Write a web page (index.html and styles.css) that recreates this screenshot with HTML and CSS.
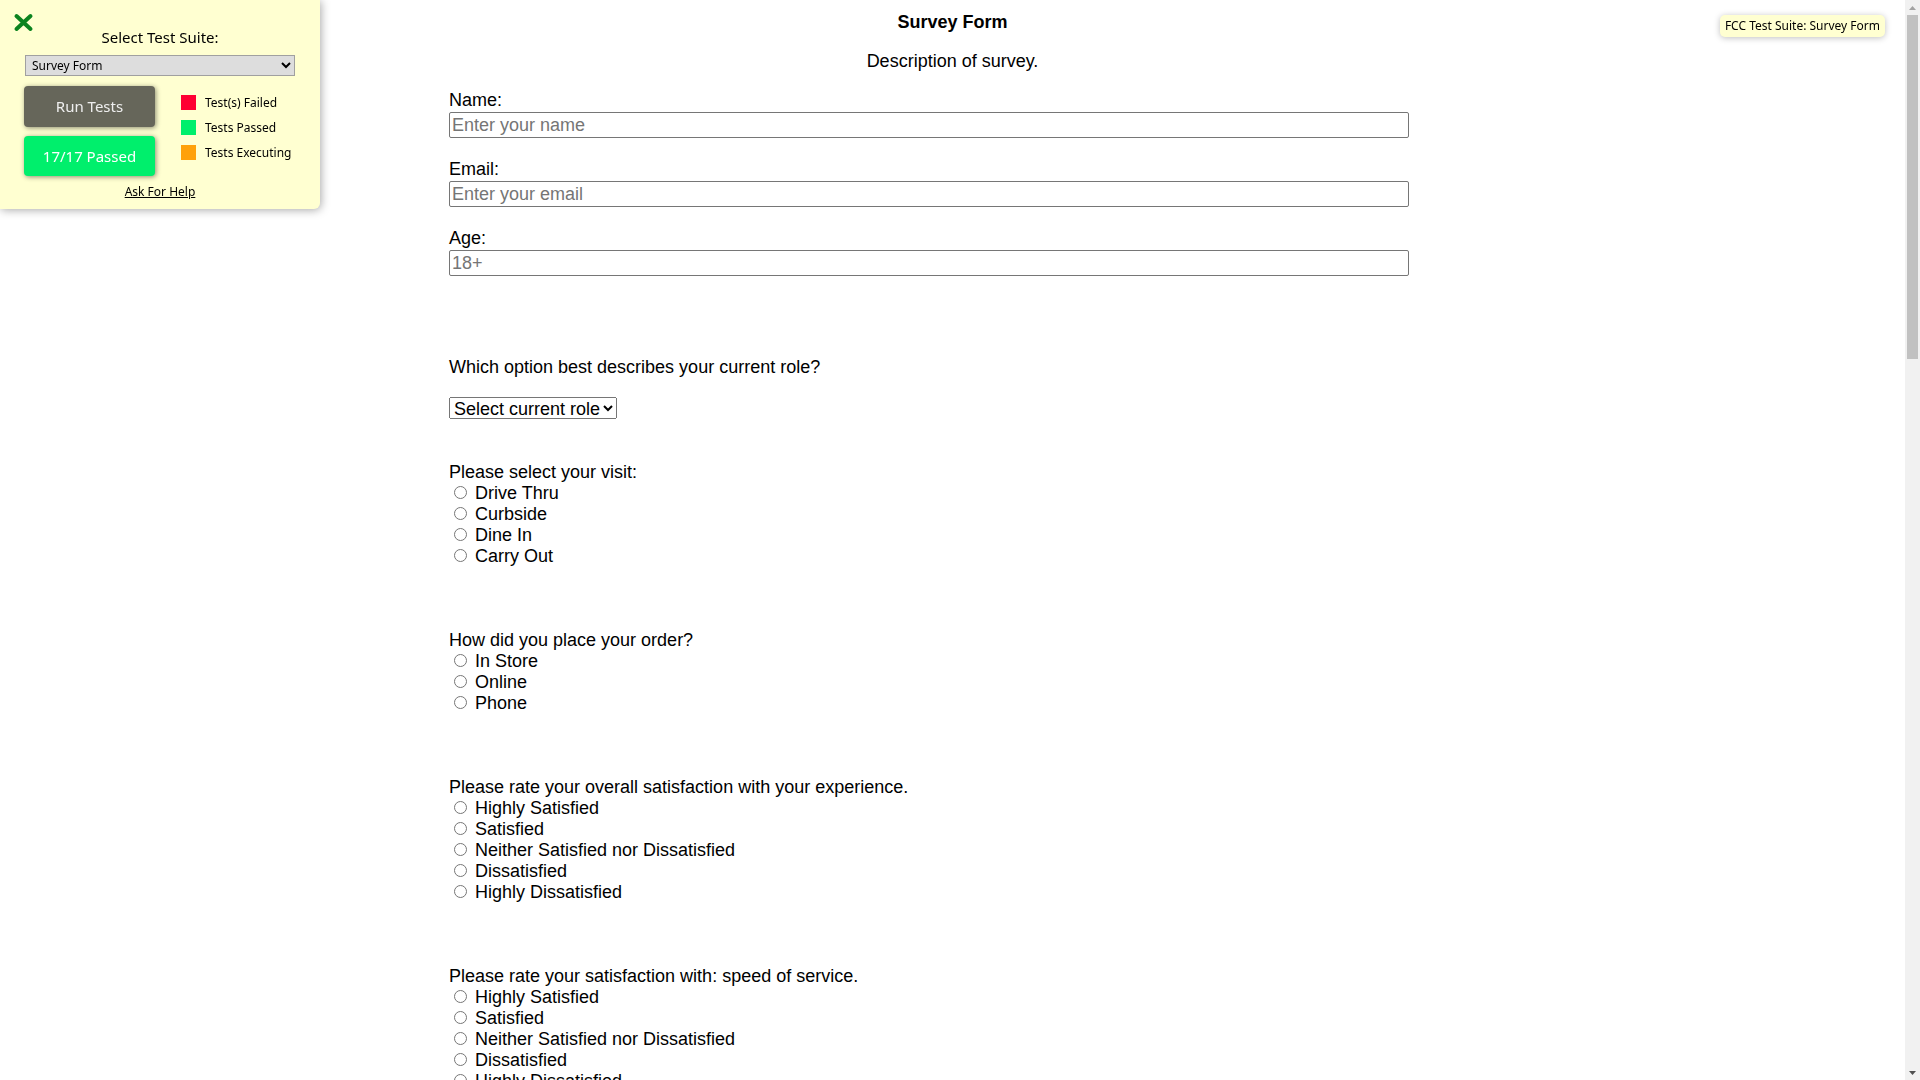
FILE: index.html
```html
<!DOCTYPE html>
<html lang="en">
<head>
<meta charset="utf-8">
<title>Survey Form</title>
<link rel="stylesheet" href="styles.css">
</head>
<body>
<header class="intro">
  <h1 class="title" id="title">Survey Form</h1>
  <p class="description" id="description">Description of survey.</p>
</header>

<form class="survey" id="survey-form">
  <div class="field">
    <label class="field-label" id="name-label" for="name">Name:</label>
    <input class="text-input" id="name" type="text" placeholder="Enter your name">
  </div>
  <div class="field">
    <label class="field-label" id="email-label" for="email">Email:</label>
    <input class="text-input" id="email" type="email" placeholder="Enter your email">
  </div>
  <div class="field">
    <label class="field-label" id="number-label" for="number">Age:</label>
    <input class="text-input" id="number" type="number" min="18" placeholder="18+">
  </div>

  <div class="question question-role">
    <p class="question-label">Which option best describes your current role?</p>
    <select class="role-select" id="dropdown">
      <option>Select current role</option>
      <option>Student</option>
      <option>Full Time Job</option>
      <option>Other</option>
    </select>
  </div>

  <div class="question question-visit">
    <p class="question-label">Please select your visit:</p>
    <label class="option"><input type="radio" name="visit"> Drive Thru</label>
    <label class="option"><input type="radio" name="visit"> Curbside</label>
    <label class="option"><input type="radio" name="visit"> Dine In</label>
    <label class="option"><input type="radio" name="visit"> Carry Out</label>
  </div>

  <div class="question">
    <p class="question-label">How did you place your order?</p>
    <label class="option"><input type="radio" name="order"> In Store</label>
    <label class="option"><input type="radio" name="order"> Online</label>
    <label class="option"><input type="radio" name="order"> Phone</label>
  </div>

  <div class="question">
    <p class="question-label">Please rate your overall satisfaction with your experience.</p>
    <label class="option"><input type="radio" name="overall"> Highly Satisfied</label>
    <label class="option"><input type="radio" name="overall"> Satisfied</label>
    <label class="option"><input type="radio" name="overall"> Neither Satisfied nor Dissatisfied</label>
    <label class="option"><input type="radio" name="overall"> Dissatisfied</label>
    <label class="option"><input type="radio" name="overall"> Highly Dissatisfied</label>
  </div>

  <div class="question">
    <p class="question-label">Please rate your satisfaction with: speed of service.</p>
    <label class="option"><input type="radio" name="speed"> Highly Satisfied</label>
    <label class="option"><input type="radio" name="speed"> Satisfied</label>
    <label class="option"><input type="radio" name="speed"> Neither Satisfied nor Dissatisfied</label>
    <label class="option"><input type="radio" name="speed"> Dissatisfied</label>
    <label class="option"><input type="radio" name="speed"> Highly Dissatisfied</label>
  </div>
</form>

<div class="suite" id="fcc_test_suite_wrapper">
  <button class="suite-close" type="button" aria-label="Close">
    <svg viewBox="0 0 21 19" width="21" height="19" aria-hidden="true">
      <path d="M3.5 3 L17.5 16 M17.5 3 L3.5 16" stroke="#0b831f" stroke-width="4" stroke-linecap="round" fill="none"/>
    </svg>
  </button>
  <p class="suite-heading">Select Test Suite:</p>
  <select class="suite-select">
    <option>Survey Form</option>
    <option>Tribute Page</option>
    <option>Product Landing Page</option>
  </select>
  <div class="suite-row">
    <div class="suite-buttons">
      <button class="suite-btn suite-btn-run" type="button">Run Tests</button>
      <button class="suite-btn suite-btn-pass" type="button">17/17 Passed</button>
    </div>
    <ul class="suite-legend">
      <li class="legend-item"><span class="swatch swatch-fail"></span>Test(s) Failed</li>
      <li class="legend-item"><span class="swatch swatch-pass"></span>Tests Passed</li>
      <li class="legend-item"><span class="swatch swatch-run"></span>Tests Executing</li>
    </ul>
  </div>
  <a class="suite-help" href="#">Ask For Help</a>
</div>

<div class="suite-tip">FCC Test Suite: Survey Form</div>

<div class="scrollbar" aria-hidden="true">
  <span class="scroll-btn">
    <svg viewBox="0 0 7 4" width="7" height="4"><polygon points="0,4 3.5,0 7,4" fill="#a3a3a3"/></svg>
  </span>
  <span class="scroll-thumb"></span>
  <span class="scroll-btn scroll-btn-down">
    <svg viewBox="0 0 7 4" width="7" height="4"><polygon points="0,0 7,0 3.5,4" fill="#505050"/></svg>
  </span>
</div>
</body>
</html>
```

FILE: styles.css
```css
body {
  margin: 0;
  padding-right: 15px;
  font-family: "Liberation Sans", Arial, sans-serif;
  font-size: 18px;
  line-height: 21px;
  color: #000;
  background: #fff;
}

/* Header */
.intro {
  text-align: center;
  padding-top: 12px;
}
.title {
  margin: 0;
  font-size: 18px;
  line-height: 21px;
  font-weight: bold;
}
.description {
  margin: 18px 0 0;
}

/* Form */
.survey {
  width: 960px;
  margin: 18px 0 0 449px;
}
.field + .field {
  margin-top: 21px;
}
.field-label {
  display: block;
}
.text-input {
  display: block;
  box-sizing: border-box;
  width: 960px;
  height: 26px;
  margin: 1px 0 0;
  padding: 1px 2px;
  border: 1px solid #767676;
  border-radius: 2px;
  font: 18px "Liberation Sans", Arial, sans-serif;
  color: #000;
}
.text-input::placeholder {
  color: #757575;
}

.question {
  margin-top: 63px;
}
.question-role {
  margin-top: 81px;
}
.question-visit {
  margin-top: 43px;
}
.question-label {
  display: block;
  margin: 0;
}
.role-select {
  display: block;
  box-sizing: border-box;
  width: 168px;
  height: 22px;
  margin-top: 19px;
  font: 18px "Liberation Sans", Arial, sans-serif;
  color: #000;
}
.option {
  display: block;
}
.option input {
  margin: 3px 3px 0 5px;
}

/* Test suite panel (overlay) */
.suite {
  position: fixed;
  top: 0;
  left: 0;
  z-index: 10;
  width: 320px;
  height: 209px;
  box-sizing: border-box;
  background: #ffffd1;
  border-bottom-right-radius: 6px;
  box-shadow: 1px 1px 10px rgba(0, 0, 0, 0.35);
  font-family: "Noto Sans", "Open Sans", sans-serif;
  color: #000;
}
.suite-close {
  position: absolute;
  top: 13px;
  left: 13px;
  width: 21px;
  height: 19px;
  padding: 0;
  border: 0;
  background: none;
}
.suite-close svg {
  display: block;
}
.suite-heading {
  margin: 0;
  padding-top: 27px;
  font-size: 15px;
  line-height: 20px;
  text-align: center;
}
.suite-select {
  display: block;
  box-sizing: border-box;
  width: 270px;
  height: 21px;
  margin: 8px auto 0;
  padding: 0 0 0 2px;
  font: 12px "Noto Sans", sans-serif;
  color: #000;
  background-color: #dddddd;
  border: 1px solid #a0a0a0;
  border-radius: 0;
}
.suite-row {
  display: flex;
  gap: 26px;
  margin: 10px 0 0 24px;
}
.suite-buttons {
  display: flex;
  flex-direction: column;
  gap: 9px;
  width: 131px;
}
.suite-btn {
  height: 41px;
  padding: 0 0 1px;
  border: 0;
  border-radius: 4px;
  font: 15px "Noto Sans", sans-serif;
  box-shadow: 1px 1px 5px rgba(0, 0, 0, 0.45);
}
.suite-btn-run {
  background: #66665a;
  color: #eeeeee;
}
.suite-btn-pass {
  height: 40px;
  background: #00ef6c;
  color: #ffffff;
}
.suite-legend {
  display: flex;
  flex-direction: column;
  gap: 10px;
  margin: 0;
  padding: 9px 0 0;
  list-style: none;
}
.legend-item {
  display: flex;
  align-items: center;
  height: 15px;
  font-size: 12px;
}
.swatch {
  width: 15px;
  height: 15px;
  margin-right: 9px;
}
.swatch-fail { background: #ff0033; }
.swatch-pass { background: #00ef6c; }
.swatch-run { background: #ffa10a; }
.suite-help {
  display: block;
  margin-top: 8px;
  font-size: 12px;
  line-height: 16px;
  text-align: center;
  color: #000;
  text-decoration: underline;
}

.suite-tip {
  position: fixed;
  top: 15px;
  right: 35px;
  z-index: 10;
  padding: 3px 5px;
  font: 12px/16px "Noto Sans", sans-serif;
  background: #ffffd1;
  border-radius: 5px;
  box-shadow: 0 1px 6px rgba(0, 0, 0, 0.25);
}

/* Window scrollbar (drawn) */
.scrollbar {
  position: fixed;
  top: 0;
  right: 0;
  z-index: 20;
  display: flex;
  flex-direction: column;
  width: 15px;
  height: 100vh;
  background: #f1f1f1;
}
.scroll-btn {
  display: flex;
  align-items: center;
  justify-content: center;
  flex: none;
  height: 15px;
}
.scroll-btn svg {
  display: block;
}
.scroll-btn-down {
  margin-top: auto;
}
.scroll-thumb {
  flex: none;
  height: 344px;
  margin: 0 2px;
  background: #c1c1c1;
}
```
